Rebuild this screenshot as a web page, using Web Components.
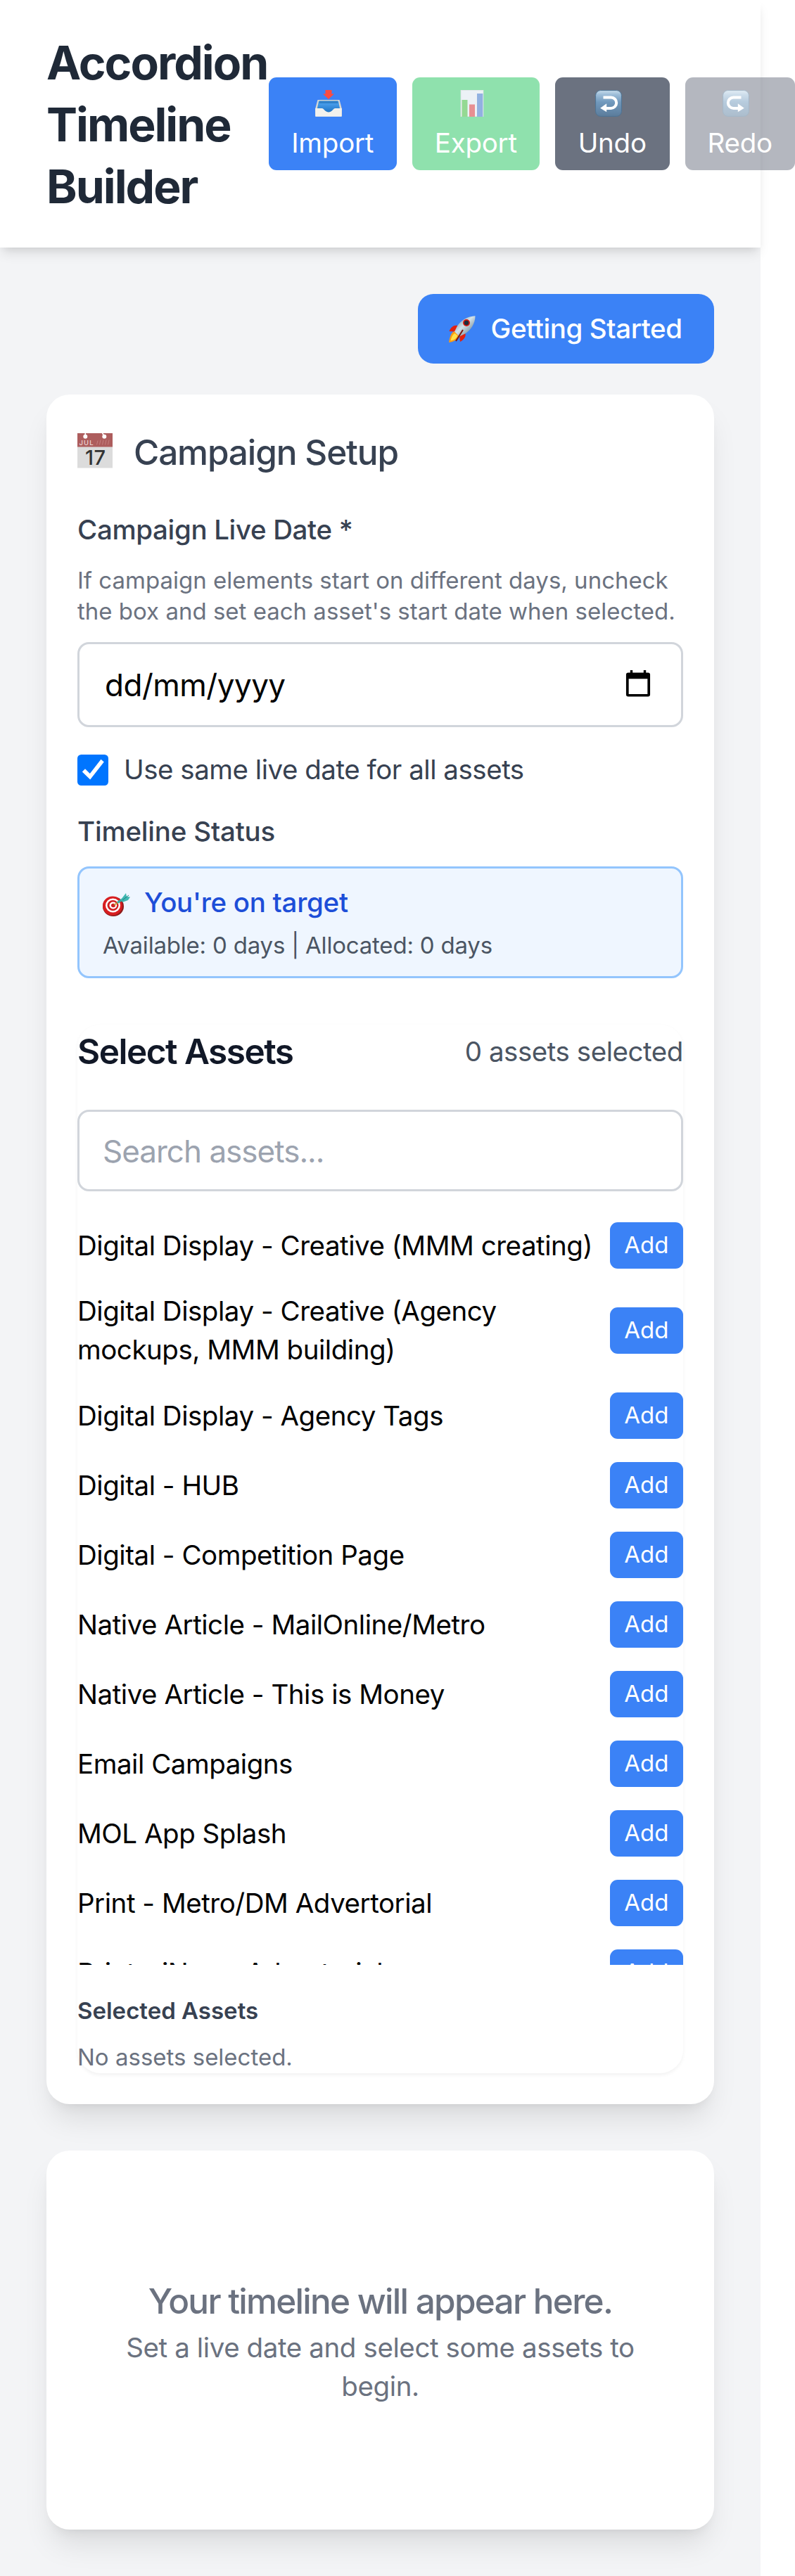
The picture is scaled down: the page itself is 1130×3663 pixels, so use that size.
<!DOCTYPE html>
<html lang="en">
<head>
<meta charset="utf-8">
<title>Accordion Timeline Builder</title>
<style>
  html { font-size: 44px; background: #fff; }
  body { margin: 0; width: 1130px; overflow: hidden; font-family: Inter, "Liberation Sans", sans-serif; line-height: 1.5; color: #000; }
</style>
</head>
<body>
<app-shell></app-shell>
<script>
const define = (name, html, setup) => {
  const tpl = document.createElement('template');
  tpl.innerHTML = html;
  customElements.define(name, class extends HTMLElement {
    constructor() {
      super();
      this.attachShadow({ mode: 'open' }).append(tpl.content.cloneNode(true));
    }
    connectedCallback() { if (setup) setup.call(this, this.shadowRoot); }
  });
};

const arrow = (d) => `<defs><linearGradient id="g" x1="0" y1="0" x2="0" y2="1"><stop offset="0" stop-color="#c6dcec"/><stop offset=".16" stop-color="#9dbdd8"/><stop offset=".45" stop-color="#7199bd"/><stop offset="1" stop-color="#5b7c9b"/></linearGradient></defs>
  <rect x=".6" y=".6" width="36.8" height="36.8" rx="7" fill="url(#g)" stroke="#4d7394" stroke-width="1"/>${d}`;
const ICONS = {
  inbox: ['0 0 38 38', `<defs><linearGradient id="b" x1="0" y1="0" x2="0" y2="1"><stop offset="0" stop-color="#55a9f5"/><stop offset="1" stop-color="#1b72c4"/></linearGradient></defs>
    <path d="M3.500 14h31L38 27v10.500H0V27z" fill="#d9d8d2"/><path d="M5 15.500h28l2.200 11.500-7 .5-9 5-9-5-7.400-.5z" fill="url(#b)"/><path d="M6 15.500h26l.7 3.500H5.300z" fill="#1767ad" opacity=".55"/>
    <path d="M.3 26h9.200c3.500.3 4.500 5.600 9.500 5.600s6-5.300 9.500-5.600h9.200l-.3 11.700H.6z" fill="#f2f1ed"/>
    <path d="M14.500 0h9v5.500h3.500L19 13 11 5.500h3.500z" fill="#fb4b41"/>`],
  chart: ['0 0 38 38', `<path d="M2.700 0h32.600v38H2.700z" fill="#c9ced4"/><path d="M3.700 1h30.600v36H3.700z" fill="#dbe5ef"/><path d="M4.500 14h8v24h-8z" fill="#2bb52a"/><path d="M15 20.500h8V38h-8z" fill="#d02128"/><path d="M26 5h8.300v33H26z" fill="#2765c4"/>`],
  undo: ['0 0 38 38', arrow('<path d="M11.500 10.500h11a7.700 7.700 0 0 1 0 15.400H14" fill="none" stroke="#fff" stroke-width="4"/><path d="M7.200 25.700l9-6.500v12z" fill="#fff"/>')],
  redo: ['0 0 38 38', arrow('<path d="M26.500 10.500h-11a7.700 7.700 0 0 0 0 15.400H24" fill="none" stroke="#fff" stroke-width="4"/><path d="M30.800 25.700l-9-6.500v12z" fill="#fff"/>')],
  rocket: ['0 0 38 38', `<defs><linearGradient id="r" x1="0" y1="0" x2="1" y2="1"><stop offset="0" stop-color="#5b7384"/><stop offset=".45" stop-color="#d3e3ea"/><stop offset="1" stop-color="#4c6272"/></linearGradient></defs>
    <path d="M12 14C7 13 3 16 .5 22l11 1z" fill="#e3200f"/><path d="M23 24c2 5-1 9.500-7 13l-1.200-11z" fill="#e3200f"/>
    <path d="M8 22C3 24 1 31 0 38c7-1 12-4 15-9z" fill="#ff9b10"/><path d="M8.500 25C5 27 3.500 31 2.500 35.500c5-1 8-3 10-7z" fill="#ffe04a"/>
    <path d="M37.500.3C27 1 17 6 11.500 15.500L8 22.500l7 7 8-4C31 21 37.500 11 37.500.3z" fill="url(#r)"/><circle cx="25" cy="10" r="5" fill="#d61a14"/><circle cx="25" cy="10" r="3.200" fill="#1c2d3c"/><path d="M20 20L10 36" stroke="#7e1b10" stroke-width="2"/>`],
  calendar: ['0 0 50 50', `<path d="M0 0h50v50H0z" fill="#dcdcdc"/><path d="M0 0h50v19.500H0z" fill="#ad5d5d"/><path d="M0 49h50v1H0z" fill="#eee"/>
    <circle cx="11.300" cy="4.800" r="3" fill="#fff"/><circle cx="38.300" cy="4.800" r="3" fill="#fff"/><path d="M11.300 0v4M35.500 0l2.800 4" stroke="#fff" stroke-width="1.600"/>
    <path d="M27.500 16.500l1.500-6m2.500 6l1.500-7m2.500 7l1.500-7m2.500 7l1.500-7m2.500 7l1.500-7" stroke="#c47f7f" stroke-width="1"/>
    <text x="2.500" y="17" font-size="9.500" font-family="Inter, sans-serif" textLength="19" fill="#ecd6d6">JUL</text>
    <text x="11" y="44.500" font-size="29" font-family="Inter, sans-serif" textLength="28" fill="#333">17</text>`],
  target: ['0 0 39 33', `<ellipse cx="15" cy="19" rx="15" ry="14" fill="#8e1a1a"/><ellipse cx="14" cy="18" rx="14" ry="13.500" fill="#d81e20"/><ellipse cx="14.500" cy="17.500" rx="10.500" ry="10" fill="#fff"/><ellipse cx="14.500" cy="17.500" rx="8" ry="7.600" fill="#cf1f22"/><ellipse cx="14.800" cy="17.500" rx="5.300" ry="5" fill="#fff"/><ellipse cx="15" cy="17.500" rx="3" ry="2.800" fill="#cf1f22"/>
    <path d="M16 17L28 9" stroke="#c79a3a" stroke-width="2"/><path d="M21 13.500L31 7" stroke="#2fa9a4" stroke-width="3"/><path d="M26 9l7-9 1 5 5 .5-3 4.500-8 3z" fill="#3fb8b2"/><path d="M28 10l9-7" stroke="#1f7f80" stroke-width="1"/>`],
  picker: ['0 0 36 40', `<path d="M3.500 3.500h29a3 3 0 0 1 3 3v29a3 3 0 0 1-3 3h-29a3 3 0 0 1-3-3v-29a3 3 0 0 1 3-3zM4.300 12.500v22.300h27.400V12.500z" fill="#000" fill-rule="evenodd"/><path d="M6.500 0H10v4H6.500zM26 0h3.500v4H26z" fill="#000"/>`],
  check: ['0 0 44 44', `<rect width="44" height="44" rx="5.500" fill="#0075ff"/><path d="M6.800 24.500l4.200-4.300 6.800 6.800L33.500 6.800l4.300 3.800L18.200 35.500z" fill="#fff"/>`]
};
define('ui-icon', `<style>:host{display:block;flex:none}svg{display:block;width:100%;height:100%}</style>`, function (root) {
  if (root.querySelector('svg')) return;
  const [box, body] = ICONS[this.getAttribute('name')];
  root.innerHTML += `<svg viewBox="${box}" aria-hidden="true">${body}</svg>`;
});

define('tool-button', `<style>
  :host{display:flex;flex-direction:column;align-items:center;flex:none;box-sizing:border-box;height:132px;padding:11px 0;border-radius:11px;color:#fff;font-size:.875rem;line-height:55px;letter-spacing:-.25px;background:var(--bg)}
  ui-icon{width:38px;height:38px;margin:7px 11px 10px 0}
</style><slot></slot>`, function (root) {
  if (root.querySelector('ui-icon')) return;
  const icon = document.createElement('ui-icon');
  icon.setAttribute('name', this.getAttribute('icon'));
  root.querySelector('slot').before(icon);
});

define('app-header', `<style>
  :host{display:flex;align-items:center;box-sizing:border-box;width:1081px;height:352px;padding:44px 66px;background:#fff;box-shadow:0 11px 16.500px -2.750px rgba(0,0,0,.1),0 5.500px 11px -5.500px rgba(0,0,0,.1);position:relative}
  h1{margin:0;padding-top:2px;flex:none;width:316px;font-size:1.5rem;line-height:88px;font-weight:700;color:#1f2937;letter-spacing:-2px}
  nav{display:flex;gap:22px;flex:none}
</style>
<h1>Accordion Timeline Builder</h1>
<nav>
  <tool-button icon="inbox" style="width:181.500px;--bg:#3b82f6">Import</tool-button>
  <tool-button icon="chart" style="width:181.500px;--bg:#22c55e;opacity:.5">Export</tool-button>
  <tool-button icon="undo" style="width:162.500px;--bg:#6b7280">Undo</tool-button>
  <tool-button icon="redo" style="width:156.500px;--bg:#6b7280;opacity:.5">Redo</tool-button>
</nav>`);

define('start-button', `<style>
  :host{display:flex;align-items:center;box-sizing:border-box;width:421px;height:99px;padding:0 44px;gap:21.500px;border-radius:22px;background:#3b82f6;color:#fff;font-size:.875rem;font-weight:500;line-height:55px;letter-spacing:-.4px;white-space:nowrap}
  ui-icon{width:38px;height:38px}
</style><ui-icon name="rocket"></ui-icon><span><slot></slot></span>`);

define('ui-card', `<style>
  :host{display:block;box-sizing:border-box;padding:44px;border-radius:33px;background:#fff;box-shadow:0 27.500px 41.250px -8.250px rgba(0,0,0,.1),0 11px 16.500px -11px rgba(0,0,0,.1)}
</style><slot></slot>`);

define('status-box', `<style>
  :host{display:block;box-sizing:border-box;height:159px;padding:21px 33px;border:3px solid #93c5fd;border-radius:16.500px;background:#eff6ff}
  .top{display:flex;align-items:center;gap:20px;height:55px;font-size:.875rem;font-weight:500;line-height:55px;letter-spacing:-.3px;color:#1d4ed8}
  ui-icon{width:39px;height:33px;margin-top:6px}
  .sub{margin-top:11px;font-size:.75rem;line-height:44px;letter-spacing:-.2px;color:#4b5563}
</style><div class="top"><ui-icon name="target"></ui-icon><span>You're on target</span></div>
<div class="sub">Available: 0 days | Allocated: 0 days</div>`);

define('asset-row', `<style>
  :host{display:flex;align-items:center;justify-content:space-between;font-size:.875rem;line-height:55px;letter-spacing:-.47px}
  .add{flex:none;width:104.500px;height:66px;margin-left:22px;border-radius:11px;background:#3b82f6;color:#fff;font-size:.75rem;line-height:64px;letter-spacing:0;text-align:center}
</style><span><slot></slot></span><div class="add" role="button">Add</div>`);

define('asset-picker', `<style>
  :host{display:block;margin-top:66px;border-radius:33px;box-shadow:0 2.750px 5.500px rgba(0,0,0,.05)}
  .head{display:flex;align-items:center;justify-content:space-between;height:77px;color:#4b5563;font-size:.875rem;letter-spacing:-.45px}
  h3{margin:0;font-size:1.125rem;font-weight:600;line-height:77px;letter-spacing:-1.500px;color:#111827}
  .search{box-sizing:border-box;height:116px;margin-top:44px;padding:0 33px;border:3px solid #d1d5db;border-radius:16.500px;font-size:1rem;line-height:112px;letter-spacing:-1px;color:#9ca3af}
  .list{display:flex;flex-direction:column;gap:33px;height:1056px;margin-top:44px;overflow:hidden}
  asset-row{flex:none}
  h4{margin:44px 0 0;font-size:.75rem;line-height:43px;height:44px;font-weight:600;color:#374151}
  p{margin:22px 0 0;font-size:.75rem;line-height:43px;height:44px;color:#6b7280}
</style>
<div class="head"><h3>Select Assets</h3><span>0 assets selected</span></div>
<div class="search">Search assets...</div>
<div class="list"></div>
<h4>Selected Assets</h4><p>No assets selected.</p>`, function (root) {
  const list = root.querySelector('.list');
  if (list.children.length) return;
  ['Digital Display - Creative (MMM creating)', 'Digital Display - Creative (Agency mockups, MMM building)', 'Digital Display - Agency Tags', 'Digital - HUB', 'Digital - Competition Page', 'Native Article - MailOnline/Metro', 'Native Article - This is Money', 'Email Campaigns', 'MOL App Splash', 'Print - Metro/DM Advertorial', 'Print - iNews Advertorial'].forEach(t => {
    const row = document.createElement('asset-row');
    row.textContent = t;
    list.append(row);
  });
});

define('campaign-setup', `<style>
  :host{display:block;height:2343px}
  h2{display:flex;align-items:center;gap:30px;margin:0 0 44px;font-size:1.125rem;line-height:77px;font-weight:500;letter-spacing:-1.150px;color:#374151}
  h2 ui-icon{width:50px;height:50px;margin-bottom:5px}
  .label{font-size:.875rem;line-height:55px;font-weight:500;letter-spacing:-.35px;color:#374151}
  .help{margin-top:22px;font-size:.75rem;line-height:44px;letter-spacing:0;color:#6b7280}
  .date{display:flex;align-items:center;justify-content:space-between;box-sizing:border-box;height:121px;margin-top:22px;padding:0 43px 0 36px;border:3px solid #d1d5db;border-radius:16.500px;font-size:1rem;letter-spacing:-.5px;color:#000}
  .date ui-icon{width:36px;height:39px;margin-bottom:3px}
  .same{display:flex;align-items:center;gap:22px;height:55px;margin-top:33px;font-size:.875rem;letter-spacing:-.48px;color:#374151}
  .same ui-icon{width:44px;height:44px}
  .status{margin:33px 0 22px;letter-spacing:-.2px}
</style>
<h2><ui-icon name="calendar"></ui-icon><span>Campaign Setup</span></h2>
<div class="label">Campaign Live Date *</div>
<div class="help">If campaign elements start on different days, uncheck<br>the box and set each asset's start date when selected.</div>
<div class="date"><span>dd/mm/yyyy</span><ui-icon name="picker"></ui-icon></div>
<div class="same"><ui-icon name="check"></ui-icon><span>Use same live date for all assets</span></div>
<div class="label status">Timeline Status</div>
<status-box></status-box>
<asset-picker></asset-picker>`);

define('timeline-empty', `<style>
  :host{display:block;box-sizing:border-box;height:451px;padding:132px 22px 0;text-align:center;color:#6b7280;font-size:.875rem;line-height:55px;letter-spacing:-.4px}
  .big{font-size:1.125rem;font-weight:450;line-height:77px;letter-spacing:-1.750px}
</style><div class="big">Your timeline will appear here.</div><div>Set a live date and select some assets to begin.</div>`);

define('app-shell', `<style>
  :host{display:block;width:1130px}
  main{box-sizing:border-box;width:1081px;height:3311px;padding:66px;background:#f3f4f6;display:flex;flex-direction:column;overflow:hidden}
  start-button{align-self:flex-end;margin-bottom:44px}
  ui-card+ui-card{margin-top:66px}
</style>
<app-header></app-header>
<main>
  <start-button>Getting Started</start-button>
  <ui-card><campaign-setup></campaign-setup></ui-card>
  <ui-card><timeline-empty></timeline-empty></ui-card>
</main>`);
</script>
</body>
</html>
